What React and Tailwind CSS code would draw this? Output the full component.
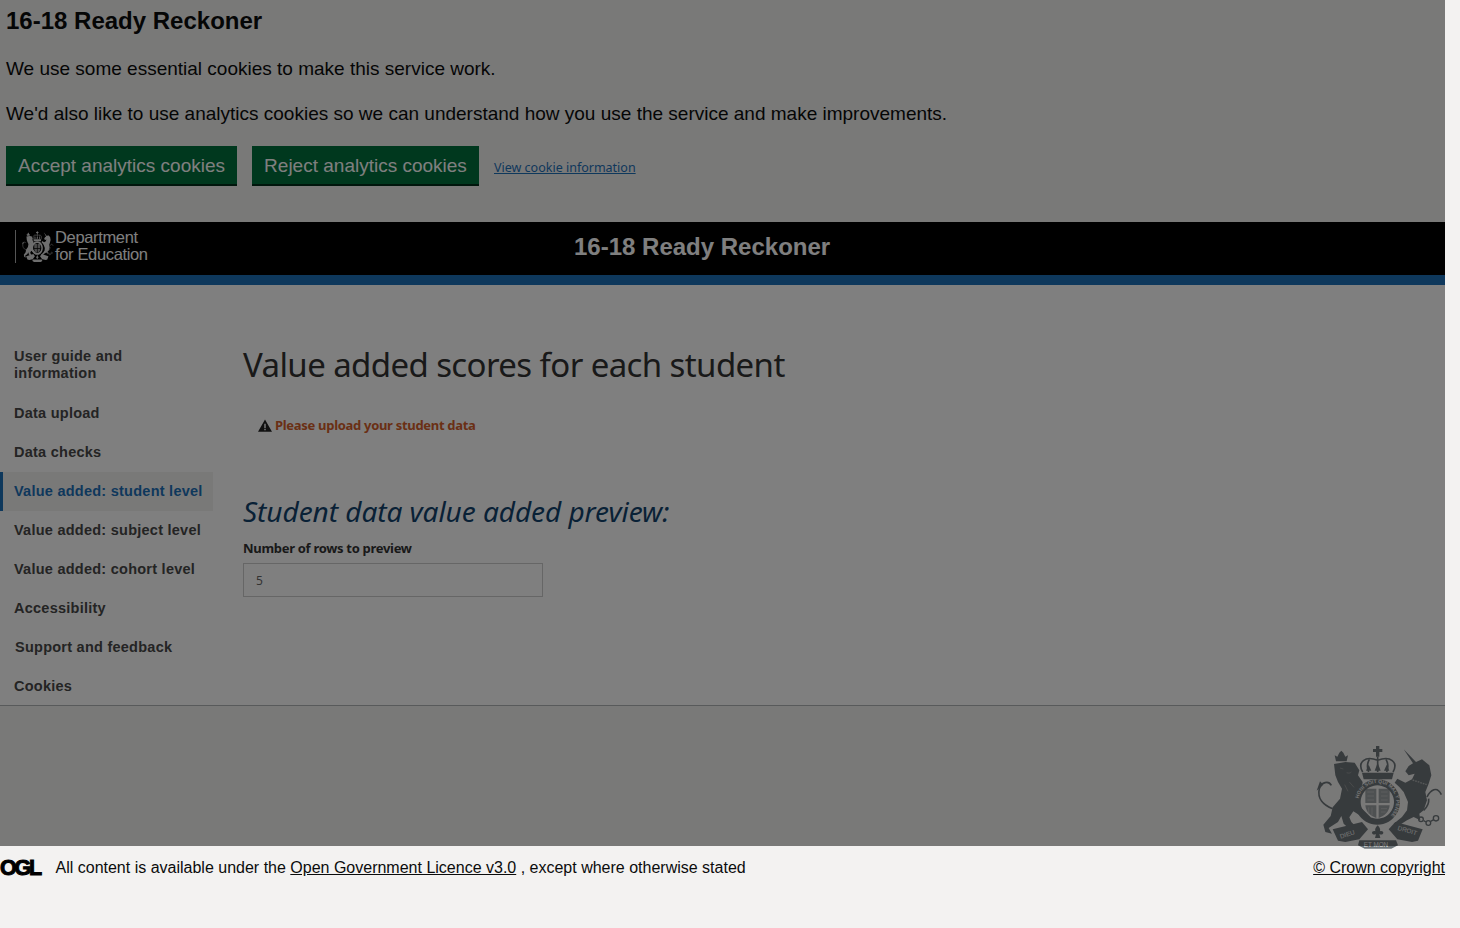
const navItems = [
  { label: 'User guide and information', wrap: true },
  { label: 'Data upload' },
  { label: 'Data checks' },
  { label: 'Value added: student level', active: true },
  { label: 'Value added: subject level' },
  { label: 'Value added: cohort level' },
  { label: 'Accessibility' },
  { label: 'Support and feedback', nudge: true },
  { label: 'Cookies' },
];

// royal arms, drawn on a 399x330 grid
function Crest({ className, motto, stretch }) {
  return (
    <svg viewBox="0 0 399 330" preserveAspectRatio={stretch ? 'none' : 'xMidYMid meet'} className={className} fill="currentColor">
      {/* lion */}
      <path d="M68 40l8 4 6-12 6-6 6 6 6 12 8-4-4 18H72z" />
      <path d="M66 66L100 60 128 62 142 85 138 100 152 120 148 150 136 168 140 190 176 226 172 238 150 224 124 208 112 226 118 240 136 258 120 268 95 245 88 222 78 240 50 258 60 275 40 270 34 248 56 222 62 196 84 170 90 140 78 120 70 100z" />
      <path d="M84 78l10 3M104 92c6 2 10 2 14-2M112 120l14 16M98 128l10 20" fill="none" stroke="#a8a8a8" strokeOpacity="0.6" strokeWidth="3" />
      <path d="M62 200C35 190 15 170 22 140 28 120 50 115 58 130" fill="none" stroke="currentColor" strokeWidth="5" />
      <path d="M24 118L14 146 34 128z" />
      {/* crown */}
      <path d="M192 12h10v9h9v9h-9v14h-10V30h-9v-9h9z" />
      <path d="M152 90C135 60 160 40 197 55 235 40 260 60 243 90M197 44V90M172 52C165 65 165 78 170 90M222 52C229 65 229 78 224 90" fill="none" stroke="currentColor" strokeWidth="5" />
      <path d="M170 68l8 18h-16zM197 62l9 24h-18zM224 68l8 18h-16zM150 92H245L240 112H155z" />
      {/* garter */}
      <path fillRule="evenodd" d="M196 112a68 68 0 1 1-.01 0zM196 130a50 50 0 1 0 .01 0z" />
      {motto && (
        <>
          <path id="garter" d="M139 180A57 57 0 1 1 253 180A57 57 0 1 1 139 180" fill="none" />
          <text fontFamily="Liberation Sans, sans-serif" fontSize="15" fontWeight="700" fill="#ececec">
            <textPath href="#garter" startOffset="3%">HONI SOIT QUI MAL Y PENSE</textPath>
          </text>
        </>
      )}
      {/* shield */}
      <path d="M160 140H193V183H160zM200 140H233V183H200zM160 190H193V228C175 222 162 210 160 190zM200 190H233C231 210 218 222 200 228z" fillOpacity="0.65" />
      <path d="M166 150h20M166 162h20M166 174h20M207 150h20M207 162h20M207 174h20M207 200h18M207 210h14M170 196v20M180 196v24" stroke="#cfcfcf" strokeOpacity="0.55" strokeWidth="3" fill="none" />
      {/* unicorn */}
      <path d="M275 22L312 60 330 52 352 70 358 100 350 125 340 150 345 175 335 205 322 215 325 235 305 225 285 235 258 252 245 245 270 225 285 205 288 180 275 150 262 135 248 122 256 110 280 122 300 112 308 95 290 100 280 88 290 72 303 64z" />
      <path d="M302 114l42 14" fill="none" stroke="#cfcfcf" strokeOpacity="0.7" strokeWidth="4" strokeDasharray="5 3" />
      <path d="M345 165C355 145 375 130 388 158M350 170C352 190 340 200 335 205" fill="none" stroke="currentColor" strokeWidth="5" />
      <g fill="none" stroke="currentColor" strokeWidth="4">
        <circle cx="327" cy="232" r="7" />
        <circle cx="349" cy="243" r="7" />
        <circle cx="372" cy="229" r="8" />
        <path d="M335 236l7 4M356 238l9-5" />
      </g>
      {/* motto ribbon */}
      <path d="M62 262L150 240 168 262 142 292 100 300 78 296z" />
      <path d="M332 262L250 240 230 262 256 292 300 300 318 296z" />
      <path d="M142 295H252L258 310 238 320H158L138 310z" />
      <path d="M197 250c6 6 9 12 7 18 5-2 10 0 10 5-2 5-7 6-12 3l3 12h-16l3-12c-5 3-10 2-12-3 0-5 5-7 10-5-2-6 1-12 7-18z" />
      {motto && (
        <g fontFamily="Liberation Sans, sans-serif" fontSize="19" fill="#ececec">
          <text x="86" y="290" transform="rotate(-18 86 290)">DIEU</text>
          <text x="256" y="263" transform="rotate(17 256 263)">DROIT</text>
          <text x="155" y="315" fontSize="19">ET MON</text>
        </g>
      )}
    </svg>
  );
}

function OglLogo() {
  return (
    <span className="block w-[41px] font-['Liberation_Sans',sans-serif] text-[21.5px] leading-[22px] font-bold tracking-[-2.2px] text-black [-webkit-text-stroke:1px_black]">
      OGL
    </span>
  );
}

function CookieBanner() {
  return (
    <section className="flex h-[222px] flex-col bg-[#f3f2f1] px-[6px] pt-[6px] font-['Liberation_Sans',sans-serif] text-[#0b0c0c]">
      <h2 className="text-[24px] leading-[30px] font-bold">16-18 Ready Reckoner</h2>
      <p className="mt-[20px] text-[19px] leading-[25px]">We use some essential cookies to make this service work.</p>
      <p className="mt-[20px] text-[19px] leading-[25px]">We'd also like to use analytics cookies so we can understand how you use the service and make improvements.</p>
      <div className="mt-[20px] flex items-center">
        <button className="h-[40px] w-[231px] border-b-2 border-[#002d18] bg-[#00703c] pt-[3px] text-[19px] text-white">Accept analytics cookies</button>
        <button className="ml-[15px] h-[40px] w-[227px] border-b-2 border-[#002d18] bg-[#00703c] pt-[3px] text-[19px] text-white">Reject analytics cookies</button>
        <a className="ml-[15px] pt-[5px] font-['Noto_Sans',sans-serif] text-[12.5px] text-[#1d70b8] underline">View cookie information</a>
      </div>
    </section>
  );
}

function Header() {
  return (
    <header className="flex h-[63px] items-start border-b-[10px] border-[#1d70b8] bg-black text-white">
      <div className="ml-[15px] mt-[8px] flex h-[33px] w-[140px] items-center border-l border-[#aaa]">
        <Crest stretch className="ml-[5px] h-[33px] w-[33px] text-[#ddd]" />
        <div className="ml-[1px] pb-[2px] font-['Liberation_Sans',sans-serif] text-[16.5px] leading-[17px] font-light tracking-[-0.35px]">
          Department
          <br />
          for Education
        </div>
      </div>
      <div className="ml-[419px] pt-[10px] font-['Liberation_Sans',sans-serif] text-[24px] leading-[30px] font-bold">16-18 Ready Reckoner</div>
    </header>
  );
}

function Sidebar() {
  return (
    <nav className="w-[213px] shrink-0 pt-[60px] font-['Liberation_Sans',sans-serif] text-[14.5px] font-bold tracking-[0.25px] text-[#484848]">
      {navItems.map((item) => (
        <div
          key={item.label}
          className={
            item.active
              ? 'flex h-[39px] items-center border-l-[3px] border-[#1d70b8] bg-[#f3f2f1] pl-[11px] text-[#1d70b8]'
              : item.wrap
                ? 'w-[150px] pb-[12px] pl-[14px] pt-[3px] leading-[17px]'
                : item.nudge
                  ? 'flex h-[39px] items-center pl-[15px]'
                  : 'flex h-[39px] items-center pl-[14px]'
          }
        >
          {item.label}
        </div>
      ))}
    </nav>
  );
}

function MainContent() {
  return (
    <main className="ml-[30px] pt-[57px] font-['Noto_Sans',sans-serif]">
      <h1 className="text-[33px] leading-[46px] tracking-[-0.6px] text-[#333]">Value added scores for each student</h1>
      <div className="ml-[15px] mt-[28px] flex items-center gap-[3px] text-[13px] leading-[18px] font-bold tracking-[-0.3px] text-[#d55e2a]">
        <svg viewBox="0 0 16 14" className="h-[13px] w-[14px] text-[#222]">
          <path fill="currentColor" fillRule="evenodd" d="M8 0l8 14H0zM7.2 5v5h1.6V5zM7.2 11v1.5h1.6V11z" />
        </svg>
        Please upload your student data
      </div>
      <h2 className="mt-[59px] text-[28px] leading-[36px] tracking-[-0.05px] text-[#12436d] italic">Student data value added preview:</h2>
      <label className="mt-[10px] block text-[13px] leading-[18px] font-bold tracking-[-0.3px] text-[#333]">Number of rows to preview</label>
      <div className="mt-[6px] flex h-[34px] w-[300px] items-center border border-[#ccc] bg-white pl-[12px] pt-[1px] text-[12px] text-[#666]">5</div>
    </main>
  );
}

export default function App() {
  return (
    <div className="relative min-h-[928px] bg-[#f3f2f1]">
      <div className="w-[1445px]">
        <CookieBanner />
        <Header />
        <div className="flex h-[420px] bg-white">
          <Sidebar />
          <MainContent />
        </div>
        <footer className="border-t border-[#b1b4b6] bg-[#f3f2f1]">
          <div className="flex h-[140px] justify-end pt-[36px]">
            <Crest motto className="h-[110px] w-[133px] text-[#6f777b]" />
          </div>
          <div className="flex items-center pt-[11px] font-['Liberation_Sans',sans-serif] text-[16px] leading-[22px] text-[#0b0c0c]">
            <OglLogo />
            <span className="ml-[14.5px]">
              All content is available under the <a className="underline">Open Government Licence v3.0</a> , except where otherwise stated
            </span>
            <a className="ml-auto underline">© Crown copyright</a>
          </div>
        </footer>
      </div>
      <div className="absolute left-0 top-0 h-[846px] w-[1445px] bg-black/50" />
    </div>
  );
}
